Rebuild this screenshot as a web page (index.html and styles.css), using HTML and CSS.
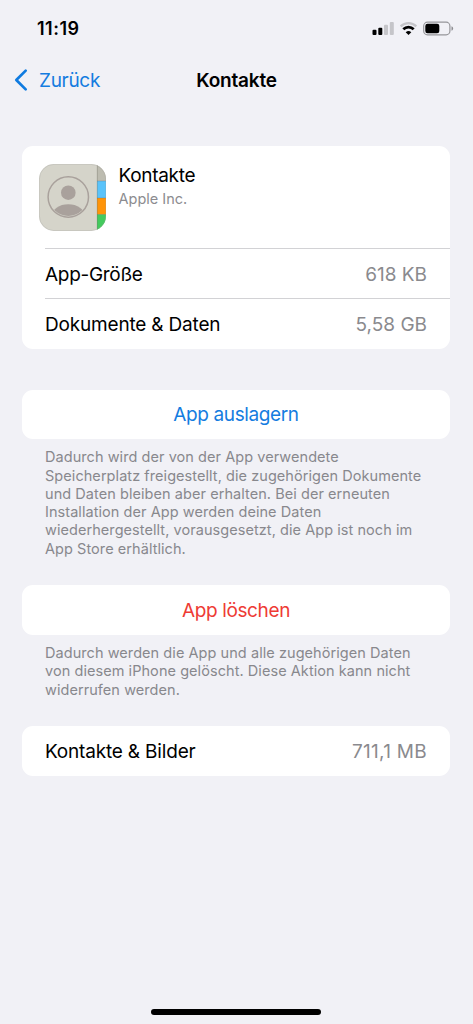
FILE: index.html
```html
<!DOCTYPE html>
<html lang="de">
<head>
<meta charset="utf-8">
<meta name="viewport" content="width=device-width, initial-scale=1">
<title>Kontakte</title>
<link rel="stylesheet" href="styles.css">
</head>
<body>
<div class="screen">
  <header class="status">
    <span class="time">11:19</span>
    <svg class="status-icons" width="82" height="16" viewBox="0 0 82 16">
      <rect x="0.5" y="9.7" width="4" height="5.3" rx="1"/>
      <rect x="6.3" y="7.7" width="4" height="7.3" rx="1"/>
      <rect x="12" y="4.7" width="4" height="10.3" rx="1" fill="#c5c5c9"/>
      <rect x="17.8" y="2" width="4" height="13" rx="1" fill="#c5c5c9"/>
      <path d="M28.7 6.3a11.2 11.2 0 0 1 15.6 0" fill="none" stroke="#c5c5c9" stroke-width="2.4"/>
      <path d="M31.3 9.3a7.4 7.4 0 0 1 10.4 0" fill="none" stroke="#000" stroke-width="2.7"/>
      <path d="M33.7 12.2a4.1 4.1 0 0 1 5.6 0l-2.8 2.9z"/>
      <rect x="51.7" y="2.2" width="26.2" height="12.6" rx="3.8" fill="none" stroke="#96969a" stroke-width="1.2"/>
      <rect x="53.3" y="3.8" width="14" height="9.4" rx="2.2"/>
      <path d="M79.5 6.3a2.3 2.3 0 0 1 0 4.4z" fill="#8c8c90"/>
    </svg>
  </header>
  <nav class="nav">
    <a class="back">
      <svg class="chevron" width="14" height="24" viewBox="0 0 14 24"><path d="M11.7 2.6 2.3 12l9.4 9.4" fill="none" stroke="#0f7be0" stroke-width="2.7" stroke-linecap="round" stroke-linejoin="round"/></svg>
      <span class="back-label">Zurück</span>
    </a>
    <h1 class="title">Kontakte</h1>
  </nav>
  <main class="content">
    <section class="card summary">
      <div class="app">
        <svg class="app-icon" width="67" height="67" viewBox="0 0 67 67">
          <defs>
            <clipPath id="shape"><rect width="67" height="67" rx="15"/></clipPath>
            <clipPath id="portrait"><circle cx="29.3" cy="33" r="19"/></clipPath>
          </defs>
          <g clip-path="url(#shape)">
            <rect width="67" height="67" fill="#d5d4ca"/>
            <rect x="58" width="9" height="17" fill="#bdbcb0"/>
            <rect x="58" y="17" width="9" height="17" fill="#5ac3fa"/>
            <rect x="58" y="34" width="9" height="16.5" fill="#ff9408"/>
            <rect x="58" y="50.5" width="9" height="17" fill="#43cb5d"/>
            <path d="M58.3 0v67" stroke="#77776b" stroke-opacity=".5" stroke-width=".8"/>
            <path d="M58 17h9M58 34h9M58 50.5h9" stroke="#555" stroke-opacity=".3" stroke-width=".8"/>
          </g>
          <rect x=".4" y=".4" width="66.2" height="66.2" rx="14.6" fill="none" stroke="#999" stroke-opacity=".3" stroke-width=".8"/>
          <circle cx="29.3" cy="33" r="20.2" fill="none" stroke="#a9a19c" stroke-width="1.5"/>
          <circle cx="29.3" cy="28.7" r="7.3" fill="#a9a19c"/>
          <ellipse cx="29.3" cy="52" rx="16.5" ry="11.7" fill="#a9a19c" clip-path="url(#portrait)"/>
        </svg>
        <div class="app-text">
          <div class="app-name">Kontakte</div>
          <div class="vendor">Apple Inc.</div>
        </div>
      </div>
      <div class="row line"><span class="label">App-Größe</span><span class="value">618 KB</span></div>
      <div class="row line"><span class="label wide">Dokumente &amp; Daten</span><span class="value">5,58 GB</span></div>
    </section>
    <button class="card action offload">App auslagern</button>
    <p class="note">Dadurch wird der von der App verwendete<br>Speicherplatz freigestellt, die zugehörigen Dokumente<br>und Daten bleiben aber erhalten. Bei der erneuten<br>Installation der App werden deine Daten<br>wiederhergestellt, vorausgesetzt, die App ist noch im<br>App Store erhältlich.</p>
    <button class="card action delete">App löschen</button>
    <p class="note">Dadurch werden die App und alle zugehörigen Daten<br>von diesem iPhone gelöscht. Diese Aktion kann nicht<br>widerrufen werden.</p>
    <section class="card row pictures"><span class="label wide">Kontakte &amp; Bilder</span><span class="value figure">711,1 MB</span></section>
  </main>
  <div class="home"></div>
</div>
</body>
</html>
```
FILE: styles.css
```css
* { box-sizing: border-box; }
body { margin: 0; background: #f1f1f6; }
.screen {
  width: 473px;
  height: 1024px;
  display: flex;
  flex-direction: column;
  overflow: hidden;
  background: #f1f1f6;
  color: #000;
  font-family: Inter, "Liberation Sans", sans-serif;
  font-size: 19px;
  letter-spacing: -0.3px;
}
.status {
  height: 56px;
  padding: 0 19px 0 37px;
  display: flex;
  align-items: center;
  justify-content: space-between;
}
.time { padding-top: 1px; font-size: 18px; font-weight: 600; letter-spacing: 0.5px; }
.nav {
  height: 48px;
  padding: 0 14px;
  display: grid;
  grid-template-columns: 1fr auto 1fr;
  align-items: center;
}
.back { display: flex; align-items: center; gap: 11px; color: #147ce0; }
.title { margin: 0; font-size: 19px; font-weight: 600; letter-spacing: -0.2px; }
.content {
  flex: 1;
  padding: 41.5px 23px 0 22px;
  display: flex;
  flex-direction: column;
}
.card { background: #fff; border-radius: 11px; flex-shrink: 0; }
.summary { height: 203.5px; margin-bottom: 40.5px; overflow: hidden; }
.app { height: 102.5px; padding: 18px 0 0 17px; display: flex; gap: 12.5px; }
.app-text { line-height: 24px; }
.vendor { font-size: 14.5px; line-height: 22px; color: #8c8c90; letter-spacing: 0; }
.row {
  height: 50px;
  padding: 1px 23px 0;
  display: flex;
  align-items: center;
  justify-content: space-between;
}
.line { margin-left: 23px; padding-left: 0; border-top: 1px solid #d2d2d5; }
.wide { letter-spacing: -0.18px; }
.value { color: #8a8a8e; letter-spacing: 0; }
.figure { letter-spacing: 0.3px; }
.action {
  height: 49.5px;
  padding: 1px 0 0;
  border: 0;
  font: inherit;
  letter-spacing: -0.38px;
}
.offload { color: #147ce0; }
.delete { color: #ee3b34; }
.note {
  margin: 9.25px 0 27.5px;
  padding-left: 23px;
  color: #88888d;
  font-size: 14.5px;
  line-height: 18.25px;
  letter-spacing: 0.06px;
  white-space: nowrap;
}
.home {
  width: 170px;
  height: 6px;
  margin: 0 0 9px 151px;
  border-radius: 3px;
  background: #000;
}
```
